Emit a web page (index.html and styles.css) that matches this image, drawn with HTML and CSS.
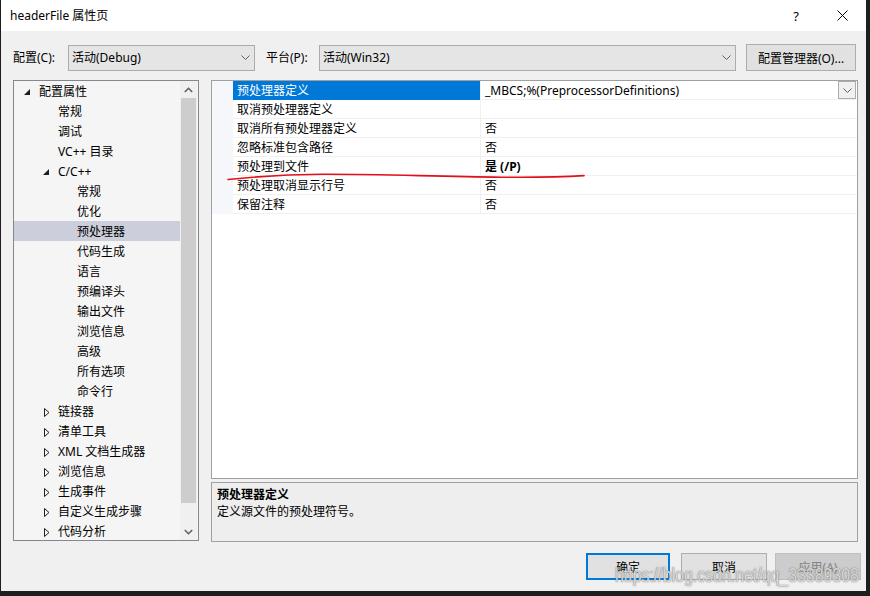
FILE: index.html
```html
<!DOCTYPE html>
<html lang="zh-CN">
<head>
<meta charset="utf-8">
<title>headerFile 属性页</title>
<link rel="stylesheet" href="styles.css">
</head>
<body>
<div class="dialog">
  <div class="titlebar">
    <span class="title">headerFile 属性页</span>
    <span class="tb-btn help">?</span>
    <span class="tb-btn close"><svg width="11" height="11" viewBox="0 0 11 11"><path d="M0.5 0.5 L10.5 10.5 M10.5 0.5 L0.5 10.5" stroke="#000" stroke-width="1" fill="none"/></svg></span>
  </div>

  <div class="toolbar">
    <span class="lbl lbl-config">配置(C):</span>
    <div class="combo combo-config"><span>活动(Debug)</span><svg class="chev" width="9" height="5" viewBox="0 0 9 5"><path d="M0.5 0.5 L4.5 4.5 L8.5 0.5" stroke="#606060" fill="none"/></svg></div>
    <span class="lbl lbl-platform">平台(P):</span>
    <div class="combo combo-platform"><span>活动(Win32)</span><svg class="chev" width="9" height="5" viewBox="0 0 9 5"><path d="M0.5 0.5 L4.5 4.5 L8.5 0.5" stroke="#606060" fill="none"/></svg></div>
    <button class="btn btn-manager">配置管理器(O)...</button>
  </div>

  <div class="main">
    <div class="tree">
      <div class="tree-items">
        <div class="ti l0"><span class="arr"><svg width="7" height="7" viewBox="0 0 7 7"><path d="M6 0 L6 6 L0 6 Z" fill="#1e1e1e"/></svg></span>配置属性</div>
        <div class="ti l1"><span class="arr"></span>常规</div>
        <div class="ti l1"><span class="arr"></span>调试</div>
        <div class="ti l1"><span class="arr"></span>VC++ 目录</div>
        <div class="ti l1"><span class="arr"><svg width="7" height="7" viewBox="0 0 7 7"><path d="M6 0 L6 6 L0 6 Z" fill="#1e1e1e"/></svg></span>C/C++</div>
        <div class="ti l2"><span class="arr"></span>常规</div>
        <div class="ti l2"><span class="arr"></span>优化</div>
        <div class="ti l2 sel"><span class="arr"></span>预处理器</div>
        <div class="ti l2"><span class="arr"></span>代码生成</div>
        <div class="ti l2"><span class="arr"></span>语言</div>
        <div class="ti l2"><span class="arr"></span>预编译头</div>
        <div class="ti l2"><span class="arr"></span>输出文件</div>
        <div class="ti l2"><span class="arr"></span>浏览信息</div>
        <div class="ti l2"><span class="arr"></span>高级</div>
        <div class="ti l2"><span class="arr"></span>所有选项</div>
        <div class="ti l2"><span class="arr"></span>命令行</div>
        <div class="ti l1"><span class="arr c"><svg width="6" height="9" viewBox="0 0 6 9"><path d="M0.5 0.5 L5 4.5 L0.5 8.5 Z" fill="none" stroke="#1e1e1e"/></svg></span>链接器</div>
        <div class="ti l1"><span class="arr c"><svg width="6" height="9" viewBox="0 0 6 9"><path d="M0.5 0.5 L5 4.5 L0.5 8.5 Z" fill="none" stroke="#1e1e1e"/></svg></span>清单工具</div>
        <div class="ti l1"><span class="arr c"><svg width="6" height="9" viewBox="0 0 6 9"><path d="M0.5 0.5 L5 4.5 L0.5 8.5 Z" fill="none" stroke="#1e1e1e"/></svg></span>XML 文档生成器</div>
        <div class="ti l1"><span class="arr c"><svg width="6" height="9" viewBox="0 0 6 9"><path d="M0.5 0.5 L5 4.5 L0.5 8.5 Z" fill="none" stroke="#1e1e1e"/></svg></span>浏览信息</div>
        <div class="ti l1"><span class="arr c"><svg width="6" height="9" viewBox="0 0 6 9"><path d="M0.5 0.5 L5 4.5 L0.5 8.5 Z" fill="none" stroke="#1e1e1e"/></svg></span>生成事件</div>
        <div class="ti l1"><span class="arr c"><svg width="6" height="9" viewBox="0 0 6 9"><path d="M0.5 0.5 L5 4.5 L0.5 8.5 Z" fill="none" stroke="#1e1e1e"/></svg></span>自定义生成步骤</div>
        <div class="ti l1"><span class="arr c"><svg width="6" height="9" viewBox="0 0 6 9"><path d="M0.5 0.5 L5 4.5 L0.5 8.5 Z" fill="none" stroke="#1e1e1e"/></svg></span>代码分析</div>
      </div>
      <div class="scrollbar">
        <div class="sb-arrow"><svg width="9" height="6" viewBox="0 0 9 6"><path d="M0.8 5 L4.5 1.3 L8.2 5" stroke="#606060" stroke-width="1.6" fill="none"/></svg></div>
        <div class="sb-track"><div class="sb-thumb"></div></div>
        <div class="sb-arrow"><svg width="9" height="6" viewBox="0 0 9 6"><path d="M0.8 1 L4.5 4.7 L8.2 1" stroke="#606060" stroke-width="1.6" fill="none"/></svg></div>
      </div>
    </div>

    <div class="right">
      <div class="grid">
        <div class="row">
          <div class="gut"></div>
          <div class="name selname">预处理器定义</div>
          <div class="val edit"><span>_MBCS;%(PreprocessorDefinitions)</span><span class="ddbtn"><svg width="9" height="5" viewBox="0 0 9 5"><path d="M0.5 0.5 L4.5 4.5 L8.5 0.5" stroke="#606060" fill="none"/></svg></span></div>
        </div>
        <div class="row"><div class="gut"></div><div class="name">取消预处理器定义</div><div class="val"></div></div>
        <div class="row"><div class="gut"></div><div class="name">取消所有预处理器定义</div><div class="val">否</div></div>
        <div class="row"><div class="gut"></div><div class="name">忽略标准包含路径</div><div class="val">否</div></div>
        <div class="row"><div class="gut"></div><div class="name">预处理到文件</div><div class="val bold">是 (/P)</div></div>
        <div class="row"><div class="gut"></div><div class="name">预处理取消显示行号</div><div class="val">否</div></div>
        <div class="row"><div class="gut"></div><div class="name">保留注释</div><div class="val">否</div></div>
        <svg class="redline" width="400" height="20" viewBox="0 0 400 20"><path d="M16 18.5 C40 16 70 13.5 110 13.2 C170 13 220 15.5 290 16.2 C330 16.6 350 16 372 14.6" stroke="#e3101b" stroke-width="1.6" fill="none" stroke-linecap="round"/></svg>
      </div>
      <div class="desc">
        <div class="desc-title">预处理器定义</div>
        <div class="desc-text">定义源文件的预处理符号。</div>
      </div>
    </div>
  </div>

  <div class="footer">
    <button class="btn fbtn ok">确定</button>
    <button class="btn fbtn cancel">取消</button>
    <button class="btn fbtn apply" disabled>应用(A)</button>
    <span class="watermark">https://blog.csdn.net/qq_33389308</span>
  </div>
</div>
</body>
</html>
```

FILE: styles.css
```css
* { box-sizing: border-box; }

html, body {
  margin: 0;
  padding: 0;
  background: #1e1e1e;
  width: 870px;
  height: 596px;
  overflow: hidden;
}

body {
  font-family: "Noto Sans", "Noto Sans CJK SC", sans-serif;
  font-size: 12px;
  color: #000;
}

.dialog {
  margin-left: 1px;
  width: 865px;
  height: 591px;
  background: #f0f0f0;
  display: flex;
  flex-direction: column;
}

.titlebar {
  height: 31px;
  background: #fff;
  display: flex;
  align-items: center;
  padding-left: 9px;
}
.title { flex: 1; font-size: 12px; line-height: 16px; }
.tb-btn {
  width: 46px;
  height: 31px;
  display: flex;
  align-items: center;
  justify-content: center;
  font-size: 13px;
}
.tb-btn.close { margin-right: 1px; }

.toolbar {
  display: flex;
  align-items: center;
  height: 27px;
  margin-top: 13px;
  padding-left: 12px;
}
.lbl { line-height: 16px; }
.lbl-config { width: 55px; }
.lbl-platform { width: 53px; margin-left: 11px; }

.combo {
  height: 26px;
  background: #e5e5e5;
  border: 1px solid #acacac;
  display: flex;
  align-items: center;
  justify-content: space-between;
  padding: 0 4px 0 3px;
}
.combo span { line-height: 16px; }
.combo-config { width: 187px; }
.combo-platform { width: 417px; }
.chev { display: block; }

.btn {
  font-family: "Noto Sans", "Noto Sans CJK SC", sans-serif;
  font-size: 12px;
  color: #000;
  background: #e1e1e1;
  border: 1px solid #adadad;
  padding: 0;
  margin: 0;
}
.btn-manager {
  margin-left: 10px;
  width: 110px;
  height: 27px;
}

.main {
  display: flex;
  margin-top: 9px;
  padding-left: 12px;
  height: 462px;
}

.tree {
  width: 186px;
  height: 461px;
  border: 1px solid #828790;
  background: #f5f5f5;
  display: flex;
}
.tree-items {
  width: 166px;
}
.ti {
  height: 20px;
  display: flex;
  align-items: center;
  white-space: nowrap;
  line-height: 16px;
  padding-top: 2px;
}
.ti.l0 { padding-left: 6px; }
.ti.l1 { padding-left: 25px; }
.ti.l2 { padding-left: 44px; }
.ti.sel { background: #cccedb; }
.arr {
  width: 19px;
  height: 18px;
  display: flex;
  align-items: center;
  padding-left: 4px;
  flex: none;
}
.arr.c { padding-left: 5px; }
.arr svg { display: block; }

.scrollbar {
  width: 17px;
  background: #f0f0f0;
  display: flex;
  flex-direction: column;
}
.sb-arrow {
  height: 17px;
  display: flex;
  align-items: center;
  justify-content: center;
}
.sb-track { flex: 1; padding: 0 1px; }
.sb-thumb {
  background: #cdcdcd;
  height: 405px;
}

.right {
  margin-left: 12px;
  width: 647px;
  display: flex;
  flex-direction: column;
}

.grid {
  position: relative;
  height: 399px;
  border: 1px solid #a0a0a0;
  background: #fff;
}
.row {
  display: flex;
  height: 19px;
}
.gut {
  width: 21px;
  background: #f5f7fb;
  flex: none;
}
.name {
  width: 247px;
  flex: none;
  padding: 2px 0 0 4px;
  line-height: 16px;
  border-bottom: 1px solid #f0f0f0;
  white-space: nowrap;
}
.name.selname {
  background: #0078d7;
  color: #fff;
  border-bottom-color: #0078d7;
}
.val {
  flex: 1;
  padding: 2px 0 0 4px;
  line-height: 16px;
  border-bottom: 1px solid #f0f0f0;
  border-left: 1px solid #f0f0f0;
  white-space: nowrap;
}
.val.bold { font-weight: bold; }
.val.edit {
  display: flex;
  justify-content: space-between;
  align-items: center;
  padding-top: 0;
  padding-right: 1px;
}
.val.edit > span:first-child { padding-top: 2px; }
.ddbtn {
  width: 18px;
  height: 18px;
  border: 1px solid #adadad;
  background: #f0f0f0;
  display: flex;
  align-items: center;
  justify-content: center;
}
.redline {
  position: absolute;
  left: 0;
  top: 80px;
}

.desc {
  margin-top: 3px;
  height: 60px;
  border: 1px solid #a0a0a0;
  background: #eeeeee;
  padding: 3px 0 0 5px;
}
.desc-title { font-weight: bold; line-height: 17px; }
.desc-text { line-height: 17px; }

.footer {
  position: relative;
  display: flex;
  padding-left: 585px;
  margin-top: 11px;
}
.fbtn {
  height: 27px;
  width: 85px;
}
.fbtn.ok {
  border: 2px solid #0078d7;
  width: 84px;
}
.fbtn.cancel { margin-left: 11px; width: 86px; }
.fbtn.apply {
  margin-left: 8px;
  width: 86px;
  background: #cccccc;
  border-color: #bfbfbf;
  color: #838383;
}
.watermark {
  position: absolute;
  left: 614px;
  top: 12px;
  font-family: "Liberation Sans", sans-serif;
  font-size: 19.5px;
  line-height: 20px;
  transform: scaleX(0.815);
  transform-origin: left center;
  color: rgba(236, 236, 236, 0.85);
  text-shadow: 0 0 1px rgba(90, 90, 90, 0.9), 0 0 2px rgba(130, 130, 130, 0.5);
  white-space: nowrap;
}
```
